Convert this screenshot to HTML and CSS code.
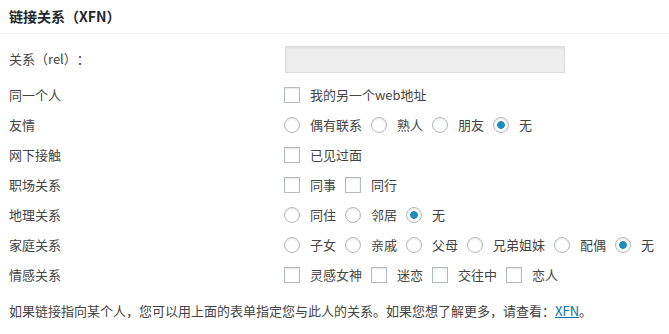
FILE: index.html
```html
<!DOCTYPE html>
<html lang="zh-CN">
<head>
<meta charset="utf-8">
<title>链接关系（XFN）</title>
<link rel="stylesheet" href="styles.css">
</head>
<body>
<div class="postbox">
  <h2 class="hndle">链接关系（XFN）</h2>
  <div class="inside">
    <div class="xfn">
      <div class="row row-rel">
        <label class="lbl" for="link_rel">关系（rel）：</label>
        <div class="ctrl"><input type="text" id="link_rel" class="rel-input" readonly></div>
      </div>
      <div class="row">
        <div class="lbl">同一个人</div>
        <div class="ctrl">
          <label class="opt"><input type="checkbox" class="cb">我的另一个web地址</label>
        </div>
      </div>
      <div class="row">
        <div class="lbl">友情</div>
        <div class="ctrl">
          <label class="opt"><input type="radio" name="friendship" class="rd">偶有联系</label>
          <label class="opt"><input type="radio" name="friendship" class="rd">熟人</label>
          <label class="opt"><input type="radio" name="friendship" class="rd">朋友</label>
          <label class="opt"><input type="radio" name="friendship" class="rd" checked>无</label>
        </div>
      </div>
      <div class="row">
        <div class="lbl">网下接触</div>
        <div class="ctrl">
          <label class="opt"><input type="checkbox" class="cb">已见过面</label>
        </div>
      </div>
      <div class="row">
        <div class="lbl">职场关系</div>
        <div class="ctrl">
          <label class="opt"><input type="checkbox" class="cb">同事</label>
          <label class="opt"><input type="checkbox" class="cb">同行</label>
        </div>
      </div>
      <div class="row">
        <div class="lbl">地理关系</div>
        <div class="ctrl">
          <label class="opt"><input type="radio" name="geo" class="rd">同住</label>
          <label class="opt"><input type="radio" name="geo" class="rd">邻居</label>
          <label class="opt"><input type="radio" name="geo" class="rd" checked>无</label>
        </div>
      </div>
      <div class="row">
        <div class="lbl">家庭关系</div>
        <div class="ctrl">
          <label class="opt"><input type="radio" name="family" class="rd">子女</label>
          <label class="opt"><input type="radio" name="family" class="rd">亲戚</label>
          <label class="opt"><input type="radio" name="family" class="rd">父母</label>
          <label class="opt"><input type="radio" name="family" class="rd">兄弟姐妹</label>
          <label class="opt"><input type="radio" name="family" class="rd">配偶</label>
          <label class="opt"><input type="radio" name="family" class="rd" checked>无</label>
        </div>
      </div>
      <div class="row">
        <div class="lbl">情感关系</div>
        <div class="ctrl">
          <label class="opt"><input type="checkbox" class="cb">灵感女神</label>
          <label class="opt"><input type="checkbox" class="cb">迷恋</label>
          <label class="opt"><input type="checkbox" class="cb">交往中</label>
          <label class="opt"><input type="checkbox" class="cb">恋人</label>
        </div>
      </div>
    </div>
    <p class="note">如果链接指向某个人，您可以用上面的表单指定您与此人的关系。如果您想了解更多，请查看：<a href="#">XFN</a>。</p>
  </div>
</div>
</body>
</html>
```
FILE: styles.css
```css
html, body {
  margin: 0;
  padding: 0;
  background: #fff;
}
body {
  font-family: "Noto Sans CJK SC", "Noto Sans", "DejaVu Sans", sans-serif;
  font-size: 13px;
  color: #444;
  text-spacing-trim: space-all;
}
.postbox {
  width: 669px;
}
.hndle {
  margin: 0;
  padding: 0 9px;
  height: 33px;
  line-height: 33px;
  font-size: 14px;
  font-weight: 700;
  color: #23282d;
  border-bottom: 1px solid #eee;
}
.inside {
  padding: 10px 0 0 9px;
}
.xfn {
  display: flex;
  flex-direction: column;
}
.row {
  display: grid;
  grid-template-columns: 275px 1fr;
  align-items: center;
  height: 30px;
}
.row-rel {
  margin-bottom: 6px;
}
.lbl {
  line-height: 20px;
}
.ctrl {
  display: flex;
  align-items: center;
  gap: 9px;
}
.rel-input {
  margin: 0 0 0 1px;
  box-sizing: border-box;
  width: 280px;
  height: 27px;
  background: #eee;
  border: 1px solid #ddd;
  box-shadow: inset 0 1px 2px rgba(0,0,0,0.07);
  padding: 0 6px;
  font: inherit;
  outline: none;
}
.opt {
  display: flex;
  align-items: center;
  gap: 10px;
  line-height: 20px;
  white-space: nowrap;
}
.cb, .rd {
  -webkit-appearance: none;
  appearance: none;
  margin: 0;
  width: 16px;
  height: 16px;
  box-sizing: border-box;
  border: 1px solid #b4b9be;
  background: #fff;
  box-shadow: inset 0 1px 2px rgba(0,0,0,0.1);
  flex: none;
}
.rd {
  border-radius: 50%;
}
.rd:checked {
  background: radial-gradient(circle at center, #1e8cbe 0, #1e8cbe 3.5px, #fff 4.2px);
}
.note {
  margin: 11px 0 0;
  line-height: 20px;
}
.note a {
  color: #0073aa;
  text-decoration: underline;
}
```
